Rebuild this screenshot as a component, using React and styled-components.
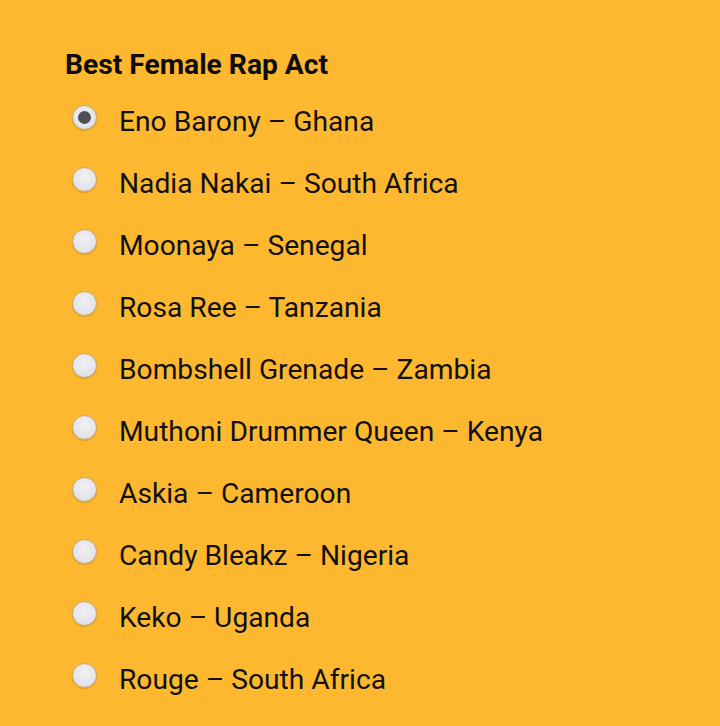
import styled, { createGlobalStyle } from "styled-components";

const GlobalStyle = createGlobalStyle`
    body {
        margin: 0;
        background: #fdb82f;
        font-family: Roboto, "Liberation Sans", sans-serif;
    }
`;

const nominees = [
    "Eno Barony – Ghana",
    "Nadia Nakai – South Africa",
    "Moonaya – Senegal",
    "Rosa Ree – Tanzania",
    "Bombshell Grenade – Zambia",
    "Muthoni Drummer Queen – Kenya",
    "Askia – Cameroon",
    "Candy Bleakz – Nigeria",
    "Keko – Uganda",
    "Rouge – South Africa",
];

const Page = styled.div`
    width: 720px;
    height: 726px;
    box-sizing: border-box;
    padding: 47px 0 0 65px;
    background: #fdb82f;
    overflow: hidden;
`;

const Title = styled.h2`
    margin: 0 0 7px;
    font-size: 28.2px;
    font-weight: 700;
    color: #0d0d0d;
    line-height: 36px;
`;

const List = styled.div`
    display: flex;
    flex-direction: column;
`;

const Option = styled.label`
    display: flex;
    align-items: center;
    height: 62px;
    gap: 22px;
    margin-left: 7px;
    font-size: 28.2px;
    color: #111;
    cursor: pointer;
`;

const Radio = styled.span`
    position: relative;
    width: 25px;
    height: 25px;
    flex-shrink: 0;
    margin-top: -7px;
    border-radius: 50%;
    box-sizing: border-box;
    border: 1px solid #c6a868;
    background: radial-gradient(circle at 50% 40%, #f2f2f5 0%, #e3e3e8 65%, #d5d5da 100%);
    box-shadow: 0 1px 1px rgba(120, 80, 0, 0.25);

    &::after {
        content: "";
        display: ${(p) => (p.checked ? "block" : "none")};
        position: absolute;
        left: 50%;
        top: 50%;
        width: 13px;
        height: 13px;
        margin: -6.5px 0 0 -6.5px;
        border-radius: 50%;
        background: #4d4f56;
    }
`;

const App = () => {
    return (
        <Page>
            <GlobalStyle />
            <Title>Best Female Rap Act</Title>
            <List>
                {nominees.map((name, i) => (
                    <Option key={name}>
                        <Radio checked={i === 0} />
                        {name}
                    </Option>
                ))}
            </List>
        </Page>
    );
};

export default App;
